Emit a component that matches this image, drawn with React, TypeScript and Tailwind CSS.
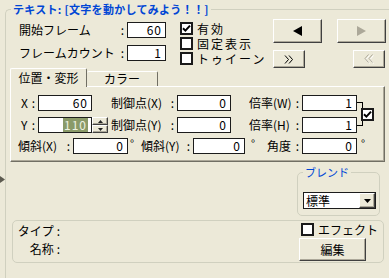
import React from 'react';
import clsx from 'clsx';

const FONT = "font-['Noto_Sans_CJK_JP','DejaVu_Sans',sans-serif]";

// classic raised button
const Btn: React.FC<{ className: string; children?: React.ReactNode }> = ({ className, children }) => (
  <div
    className={clsx(
      'flex items-center justify-center bg-[#ece9d8] border border-t-white border-l-white border-r-[#404040] border-b-[#404040] shadow-[inset_-1px_-1px_0_#aca899]',
      className
    )}
  >
    {children}
  </div>
);

const Field: React.FC<{ className: string; children?: React.ReactNode }> = ({ className, children }) => (
  <div
    className={clsx(
      'h-[16px] bg-white border border-[#1c1c1c] flex items-center justify-end pr-[3px] text-[12px] leading-[14px] tracking-[1px] text-black',
      className
    )}
  >
    {children}
  </div>
);

const Check: React.FC<{ checked?: boolean }> = ({ checked }) => (
  <div className="w-[13px] h-[13px] shrink-0 bg-white border-2 border-[#1a1a1a] flex items-center justify-center">
    {checked && (
      <svg width="9" height="9" viewBox="0 0 9 9">
        <path d="M1 4.2 L3.4 6.6 L8 1.6" fill="none" stroke="#000" strokeWidth="2" />
      </svg>
    )}
  </div>
);

const Lbl: React.FC<{ className: string; children: React.ReactNode }> = ({ className, children }) => (
  <div className={clsx('flex justify-between items-center h-[16px] pr-[3px] text-[12px] leading-[14px] text-black', className)}>
    <span>{children}</span>
    <span>:</span>
  </div>
);

const Deg: React.FC<{ className: string }> = ({ className }) => (
  <div className={clsx('h-[16px] text-[11px] leading-[10px] text-black', className)}>°</div>
);

const Spinner = () => (
  <div className="w-[16px] h-[16px] flex flex-col">
    <Btn className="h-[8px] w-[16px]">
      <svg width="5" height="3" viewBox="0 0 5 3">
        <path d="M0 3 L2.5 0 L5 3 Z" fill="#222" />
      </svg>
    </Btn>
    <Btn className="h-[8px] w-[16px]">
      <svg width="5" height="3" viewBox="0 0 5 3">
        <path d="M0 0 L2.5 3 L5 0 Z" fill="#222" />
      </svg>
    </Btn>
  </div>
);

export default function App() {
  return (
    <div className={clsx('relative w-[389px] h-[278px] overflow-hidden bg-[#ece9d8]', FONT)}>
      {/* splitter arrow on the left edge */}
      <svg className="absolute left-0 top-[176px]" width="5" height="7" viewBox="0 0 5 7">
        <path d="M0 0 L5 3.5 L0 7 Z" fill="#5d5b50" />
      </svg>

      <fieldset className="ml-[5px] mt-[2px] w-[420px] h-[300px] border-t border-l border-[#d0d0bf] rounded-tl-[5px]">
        <legend className="ml-[5px] px-[2px] text-[11px] leading-[14px] tracking-[0.3px] font-bold text-[#0046d5]">
          テキスト: [文字を動かしてみよう！！]
        </legend>

        {/* top controls */}
        <div className="flex h-[52px]">
          <div className="ml-[13px] mt-[6px] flex flex-col gap-[7px]">
            <div className="flex">
              <Lbl className="w-[108px]">開始フレーム</Lbl>
              <Field className="w-[39px]">60</Field>
            </div>
            <div className="flex">
              <Lbl className="w-[108px]">フレームカウント</Lbl>
              <Field className="w-[39px]">1</Field>
            </div>
          </div>

          <div className="ml-[14px] mt-[5px] w-[93px] flex flex-col gap-[1px] text-[12px] leading-[13px] tracking-[2px] text-black">
            <div className="flex items-center h-[14px] gap-[4px]">
              <Check checked />
              <span>有効</span>
            </div>
            <div className="flex items-center h-[14px] gap-[4px]">
              <Check />
              <span>固定表示</span>
            </div>
            <div className="flex items-center h-[14px] gap-[4px]">
              <Check />
              <span>トゥイーン</span>
            </div>
          </div>

          <div className="mt-[3px] flex flex-col gap-[7px]">
            <div className="flex gap-[15px]">
              <Btn className="w-[49px] h-[24px]">
                <svg width="9" height="10" viewBox="0 0 9 10">
                  <path d="M0 5 L9 0 L9 10 Z" fill="#000" />
                </svg>
              </Btn>
              <Btn className="w-[49px] h-[24px]">
                <svg width="9" height="10" viewBox="0 0 9 10">
                  <path d="M9 5 L0 0 L0 10 Z" fill="#aca899" />
                </svg>
              </Btn>
            </div>
            <div className="flex">
              <Btn className="w-[32px] h-[18px]">
                <svg width="10" height="9" viewBox="0 0 10 9">
                  <path d="M1 0.5 L4.5 4.5 L1 8.5 M5 0.5 L8.5 4.5 L5 8.5" fill="none" stroke="#000" strokeWidth="1" />
                </svg>
              </Btn>
              <Btn className="ml-[48px] w-[32px] h-[18px]">
                <svg width="11" height="10" viewBox="0 0 11 10">
                  <path d="M5.5 1.5 L2 5.5 L5.5 9.5 M9.5 1.5 L6 5.5 L9.5 9.5" fill="none" stroke="#fff" strokeWidth="1" />
                  <path d="M4.5 0.5 L1 4.5 L4.5 8.5 M8.5 0.5 L5 4.5 L8.5 8.5" fill="none" stroke="#aca899" strokeWidth="1" />
                </svg>
              </Btn>
            </div>
          </div>
        </div>

        {/* tabs */}
        <div className="ml-[4px] flex items-end h-[18px] text-[12px] leading-[14px] text-black">
          <div className="relative z-10 -mb-px w-[77px] h-[19px] bg-[#ece9d8] border-t border-l border-r border-t-white border-l-white border-r-[#716f64] rounded-t-[2px] flex items-center justify-center pb-[1px]">
            位置・変形
          </div>
          <div className="w-[71px] h-[15px] border-t border-r border-t-white border-r-[#716f64] rounded-t-[2px] flex items-center justify-center">
            カラー
          </div>
        </div>

        {/* tab panel */}
        <div className="ml-[4px] w-[375px] h-[76px] border border-t-white border-l-white border-r-[#716f64] border-b-[#716f64] shadow-[inset_-1px_-1px_0_#aca899] pt-[8px] flex flex-col gap-[5px]">
          <div className="flex items-center">
            <div className="flex flex-col gap-[6px]">
              <div className="flex">
                <Lbl className="w-[27px] pl-[10px]">X</Lbl>
                <Field className="w-[54px]">60</Field>
                <div className="w-[19px]" />
                <Lbl className="w-[66px]">制御点(X)</Lbl>
                <Field className="w-[54px]">0</Field>
                <div className="w-[18px]" />
                <Lbl className="w-[53px]">倍率(W)</Lbl>
                <Field className="w-[55px]">1</Field>
              </div>
              <div className="flex">
                <Lbl className="w-[27px] pl-[10px]">Y</Lbl>
                <Field className="w-[54px] pr-[1px]">
                  <span className="bg-[#8a9a68] text-[#eef2e0] px-[1px]">110</span>
                </Field>
                <Spinner />
                <div className="w-[3px]" />
                <Lbl className="w-[66px]">制御点(Y)</Lbl>
                <Field className="w-[54px]">0</Field>
                <div className="w-[18px]" />
                <Lbl className="w-[53px]">倍率(H)</Lbl>
                <Field className="w-[55px]">1</Field>
              </div>
            </div>
            <div className="w-[6px] h-[24px] border-t border-r border-b border-black" />
            <div className="-ml-[2px]">
              <Check checked />
            </div>
          </div>

          <div className="flex">
            <Lbl className="w-[62px] pl-[7px]">傾斜(X)</Lbl>
            <Field className="w-[55px]">0</Field>
            <Deg className="w-[13px] pl-[2px]" />
            <Lbl className="w-[52px]">傾斜(Y)</Lbl>
            <Field className="w-[52px]">0</Field>
            <Deg className="w-[22px] pl-[6px]" />
            <Lbl className="w-[35px]">角度</Lbl>
            <Field className="w-[55px]">0</Field>
            <Deg className="w-[10px] pl-[4px]" />
          </div>
        </div>

        {/* blend */}
        <fieldset className="ml-[291px] mt-[3px] w-[83px] border border-[#d0d0bf] rounded-[5px] pb-[6px]">
          <legend className="ml-[5px] px-[2px] text-[11px] leading-[14px] text-[#0046d5]">ブレンド</legend>
          <div className="ml-[5px] mt-[13px] w-[73px] h-[17px] bg-white border border-[#1c1c1c] flex items-center text-[12px] leading-[14px] text-black">
            <span className="pl-[2px] flex-1">標準</span>
            <Btn className="w-[16px] h-[15px]">
              <svg width="7" height="4" viewBox="0 0 7 4">
                <path d="M0 0 L7 0 L3.5 4 Z" fill="#000" />
              </svg>
            </Btn>
          </div>
        </fieldset>

        {/* type / effect */}
        <div className="ml-[6px] mt-[4px] w-[372px] h-[43px] border border-[#d0d0bf] rounded-[5px] flex justify-between text-[12px] leading-[14px] text-black">
          <div className="pt-[1px] w-[50px] flex flex-col">
            <div className="h-[18px] flex items-center justify-end pr-[3px] gap-[3px]">
              <span>タイプ</span>
              <span>:</span>
            </div>
            <div className="h-[18px] flex items-center justify-end pr-[3px] gap-[3px]">
              <span>名称</span>
              <span>:</span>
            </div>
          </div>
          <div className="pt-[2px] pr-[5px] flex flex-col gap-[2px]">
            <div className="ml-[2px] flex items-center h-[13px] gap-[4px]">
              <Check />
              <span>エフェクト</span>
            </div>
            <Btn className="w-[67px] h-[23px]">編集</Btn>
          </div>
        </div>
      </fieldset>
    </div>
  );
}
